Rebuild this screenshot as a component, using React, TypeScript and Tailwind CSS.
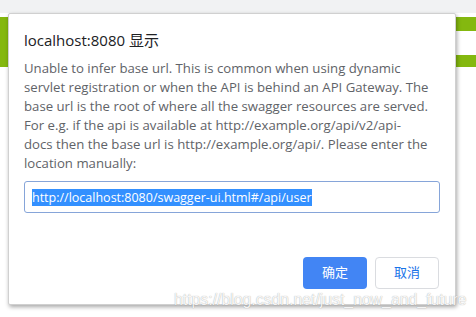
export default function App() {
  const bodyFont = { fontFamily: '"Open Sans", "Noto Sans CJK SC", sans-serif' }
  return (
    <div className="relative w-[476px] h-[317px] overflow-hidden bg-white" style={bodyFont}>
      {/* page behind the dialog */}
      <div className="h-[13px] bg-[#f1f2f3]" />
      <div className="h-[4px] bg-white" />
      <div className="flex h-[50px] flex-col bg-[#84b80f]">
        <div className="h-[14px]" />
        <div className="ml-[300px] h-[24px] bg-white" />
      </div>

      {/* dialog */}
      <div className="absolute left-[8px] top-[13px] w-[448px] h-[292px] rounded-[2px] border border-[#d0d0d0] bg-white shadow-[1px_2px_4px_rgba(0,0,0,0.35)]">
        <div className="px-[15px] pt-[16px]">
          <div className="text-[15px] leading-[20px] text-[#202124]">localhost:8080 显示</div>
          <p className="mt-[9px] whitespace-nowrap text-[13.2px] leading-[19px] text-[#5f6368]">
            Unable to infer base url. This is common when using dynamic<br />
            servlet registration or when the API is behind an API Gateway. The<br />
            base url is the root of where all the swagger resources are served.<br />
            For e.g. if the api is available at http://example.org/api/v2/api-<br />
            docs then the base url is http://example.org/api/. Please enter the<br />
            location manually:
          </p>
          <div className="mt-[8px] flex h-[32px] w-[416px] items-center rounded-[3px] border border-[#86a5d9] px-[7px]">
            <span className="bg-[#3390ff] text-[12.5px] leading-[17px] text-white">http://localhost:8080/swagger-ui.html#/api/user</span>
          </div>
          <div className="mt-[44px] flex justify-end gap-[8px] pr-[1px]">
            <button className="h-[32px] w-[64px] rounded-[4px] bg-[#4285f4] text-[13px] text-white">确定</button>
            <button className="h-[32px] w-[64px] rounded-[4px] border border-[#dadce0] bg-white text-[13px] text-[#1a73e8]">取消</button>
          </div>
        </div>
      </div>

      {/* watermark */}
      <div
        className="absolute left-[174px] top-[290px] text-[15.8px] leading-[20px] text-white/90 [text-shadow:0_0_1px_rgba(0,0,0,0.4)]"
        style={{ fontFamily: '"Liberation Sans", Arial, sans-serif' }}
      >
        https://blog.csdn.net/just_now_and_future
      </div>
    </div>
  )
}
